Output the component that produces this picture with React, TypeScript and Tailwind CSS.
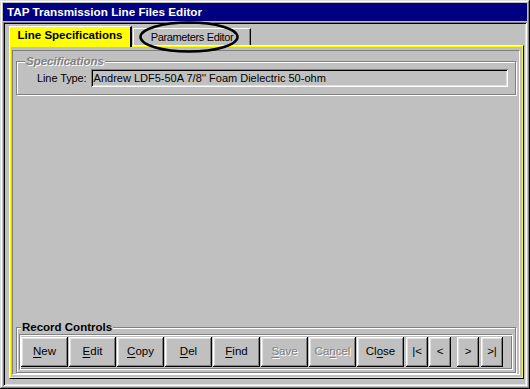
import React from "react";

const raised =
  "shadow-[inset_-1px_-1px_#000,inset_1px_1px_#fff,inset_-2px_-2px_#808080,inset_2px_2px_#dfdfdf]";

function Btn({
  w,
  children,
  disabled,
  className = "",
}: {
  w: string;
  children: React.ReactNode;
  disabled?: boolean;
  className?: string;
}) {
  return (
    <div
      className={`${w} h-[30px] bg-[#c0c0c0] ${raised} flex items-center justify-center text-[11.5px] ${
        disabled ? "text-[#808080] [text-shadow:1px_1px_0_#fff]" : "text-black"
      } ${className}`}
    >
      {children}
    </div>
  );
}

function GroupLabel({
  children,
  className = "",
}: {
  children: React.ReactNode;
  className?: string;
}) {
  return (
    <div
      className={`absolute top-[-8px] bg-[#c0c0c0] px-[1px] leading-[14px] text-[11.5px] font-bold ${className}`}
    >
      {children}
    </div>
  );
}

export default function App() {
  return (
    <div className="relative w-[530px] h-[389px] bg-[#c0c0c0] p-[3px] flex flex-col font-['Liberation_Sans',Arial,sans-serif] shadow-[inset_-1px_-1px_#000,inset_1px_1px_#dfdfdf,inset_-2px_-2px_#808080,inset_2px_2px_#fff] select-none">
      {/* Title bar */}
      <div className="h-[18px] bg-[#000080] text-white font-bold text-[11.7px] pl-[4px] flex items-center shrink-0">
        TAP Transmission Line Files Editor
      </div>

      {/* Client area */}
      <div className="mt-[1px] flex-1 flex flex-col p-[2px] shadow-[inset_1px_1px_#808080,inset_-1px_-1px_#fff,inset_2px_2px_#000,inset_-2px_-2px_#dfdfdf]">
        {/* Tab strip */}
        <div className="h-[21px] pl-[4px] flex items-end shrink-0">
          <div className="relative z-10 w-[123px] h-[21px] -mb-[2px] pb-[2px] bg-[#ffff00] border-l border-t border-white border-r-2 border-r-black flex items-center justify-center text-[11.5px] font-bold text-black">
            Line Specifications
          </div>
          <div className="ml-[1px] w-[118px] h-[17px] bg-[#c0c0c0] border-l border-t border-white border-r border-r-black shadow-[inset_-1px_0_#808080] flex items-center justify-center text-[11px] tracking-[-0.35px] text-black">
            Parameters Editor
          </div>
        </div>

        {/* Tab page */}
        <div className="ml-[4px] mr-[1px] mb-[5px] flex-1 flex flex-col border-l border-t border-white border-r border-b border-r-black border-b-black">
          <div className="flex-1 flex flex-col border border-[#ffff00]">
            <div className="ml-[1px] mt-[3px] mr-[2px] mb-[2px] flex-1 flex flex-col border border-t-[#808080] border-l-[#808080] border-r-white border-b-white">
              {/* Specifications group */}
              <div className="relative mt-[10px] mx-[3px] h-[34px] border border-[#808080] shadow-[inset_1px_1px_#fff,1px_1px_#fff] flex items-start pt-[7px] pl-[20px] pr-[7px]">
                <GroupLabel className="left-[8px] italic text-[#808080] [text-shadow:1px_1px_0_#fff]">
                  Specifications
                </GroupLabel>
                <div className="h-[18px] flex items-center text-[11px] tracking-[-0.1px] text-black">
                  Line Type:
                </div>
                <div className="ml-[4px] flex-1 h-[18px] bg-[#c0c0c0] shadow-[inset_1px_1px_#808080,inset_-1px_-1px_#fff,inset_2px_2px_#000,inset_-2px_-2px_#dfdfdf] flex items-center pl-[3px] text-[11px] text-black">
                  Andrew LDF5-50A 7/8'' Foam Dielectric 50-ohm
                </div>
              </div>

              <div className="flex-1" />

              {/* Record Controls group */}
              <div className="relative mb-[1px] mx-[3px] border border-[#808080] shadow-[inset_1px_1px_#fff,1px_1px_#fff] pt-[6px] px-[2px] pb-[2px]">
                <GroupLabel className="left-[4px] text-black">Record Controls</GroupLabel>
                <div className="border border-t-[#808080] border-l-[#808080] border-r-white border-b-white shadow-[inset_1px_1px_#fff,inset_-1px_-1px_#808080] p-[2px] pl-[1px] flex">
                  <div className="flex gap-[1px]">
                    <Btn w="w-[47px]">
                      <span>
                        <u className="underline-offset-2">N</u>ew
                      </span>
                    </Btn>
                    <Btn w="w-[47px]">
                      <span>
                        <u className="underline-offset-2">E</u>dit
                      </span>
                    </Btn>
                    <Btn w="w-[47px]">
                      <span>
                        <u className="underline-offset-2">C</u>opy
                      </span>
                    </Btn>
                    <Btn w="w-[47px]">
                      <span>
                        <u className="underline-offset-2">D</u>el
                      </span>
                    </Btn>
                    <Btn w="w-[47px]">
                      <span>
                        <u className="underline-offset-2">F</u>ind
                      </span>
                    </Btn>
                    <Btn w="w-[47px]" disabled>
                      <span>
                        <u className="underline-offset-2">S</u>ave
                      </span>
                    </Btn>
                    <Btn w="w-[47px]" disabled>
                      <span>
                        Ca<u className="underline-offset-2">n</u>cel
                      </span>
                    </Btn>
                    <Btn w="w-[47px]">
                      <span>
                        Cl<u className="underline-offset-2">o</u>se
                      </span>
                    </Btn>
                  </div>
                  <Btn w="w-[22px]" className="ml-[2px]">
                    |&lt;
                  </Btn>
                  <Btn w="w-[22px]" className="ml-[1px]">
                    &lt;
                  </Btn>
                  <Btn w="w-[22px]" className="ml-[6px]">
                    &gt;
                  </Btn>
                  <Btn w="w-[22px]" className="ml-[2px]">
                    &gt;|
                  </Btn>
                </div>
              </div>
            </div>
          </div>
        </div>
      </div>

      {/* Annotation ellipse around the Parameters Editor tab */}
      <svg
        className="absolute left-[138px] top-[20px] pointer-events-none"
        width="104"
        height="36"
        viewBox="0 0 104 36"
      >
        <ellipse cx="51" cy="17" rx="48.5" ry="14.5" fill="none" stroke="#000" strokeWidth="2.5" />
      </svg>
    </div>
  );
}
